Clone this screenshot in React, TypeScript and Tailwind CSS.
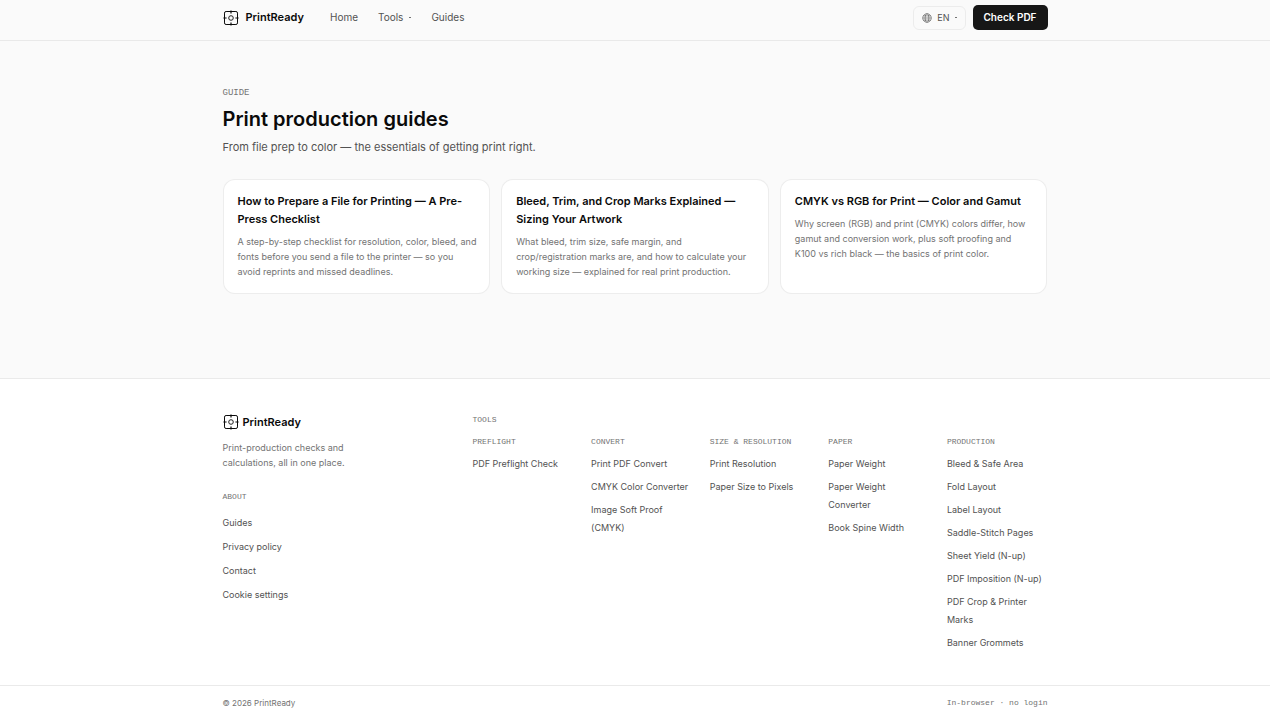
import { useState } from "react";

// Non-breaking spaces keep word pairs together inside the narrow cards.
const guides = [
  {
    title: "How to Prepare a File for Printing — A Pre-Press Checklist",
    desc: "A step-by-step checklist for resolution, color, bleed, and fonts before you send a file to the printer — so you avoid\u00a0reprints and missed deadlines.",
  },
  {
    title: "Bleed, Trim, and Crop Marks Explained — Sizing Your Artwork",
    desc: "What bleed, trim size, safe margin, and crop/registration\u00a0marks are, and how to calculate your working size — explained for real print production.",
  },
  {
    title: "CMYK vs RGB for Print — Color and Gamut",
    desc: "Why screen (RGB) and print (CMYK) colors differ, how gamut and conversion work, plus soft proofing and K100\u00a0vs rich black — the basics of print color.",
  },
];

const toolGroups = [
  { name: "Preflight", links: ["PDF Preflight Check"] },
  {
    name: "Convert",
    links: ["Print PDF Convert", "CMYK Color Converter", "Image Soft Proof (CMYK)"],
  },
  { name: "Size & resolution", links: ["Print Resolution", "Paper Size to Pixels"] },
  {
    name: "Paper",
    links: ["Paper Weight", "Paper Weight Converter", "Book Spine Width"],
  },
  {
    name: "Production",
    links: [
      "Bleed & Safe Area",
      "Fold Layout",
      "Label Layout",
      "Saddle-Stitch Pages",
      "Sheet Yield (N-up)",
      "PDF Imposition (N-up)",
      "PDF Crop & Printer Marks",
      "Banner Grommets",
    ],
  },
];

const aboutLinks = ["Guides", "Privacy policy", "Contact", "Cookie settings"];

// Registration-mark logo: rounded frame, four ticks, a ring in the middle.
function LogoMark() {
  return (
    <svg
      viewBox="0 0 16 16"
      className="size-4 shrink-0"
      fill="none"
      stroke="currentColor"
      aria-hidden="true"
    >
      <rect x="1.5" y="1.5" width="13" height="13" rx="1.6" strokeWidth="1" />
      <circle cx="8" cy="8" r="2.3" strokeWidth="0.9" />
      <path d="M8 0.4v3.2M8 12.4v3.2M0.4 8h3.2M12.4 8h3.2" strokeWidth="1.2" />
    </svg>
  );
}

function GlobeIcon() {
  return (
    <svg
      viewBox="0 0 10 10"
      className="size-[10px]"
      fill="none"
      stroke="currentColor"
      strokeWidth="0.6"
      aria-hidden="true"
    >
      <circle cx="5" cy="5" r="4.3" />
      <ellipse cx="5" cy="5" rx="1.9" ry="4.3" />
      <path d="M0.7 5h8.6M1.3 2.9h7.4M1.3 7.1h7.4" />
    </svg>
  );
}

function Caret() {
  return <span aria-hidden="true" className="h-px w-[2px] bg-neutral-500" />;
}

function Header() {
  const [toolsOpen, setToolsOpen] = useState(false);

  return (
    <header className="border-b border-neutral-200/80">
      <div className="mx-auto flex max-w-[857px] items-center justify-between px-4 pt-[5px] pb-[10px]">
        <div className="flex items-center gap-[26px]">
          <a href="#" className="flex items-center gap-[7px] text-[11px] font-semibold text-neutral-950">
            <LogoMark />
            PrintReady
          </a>
          <nav className="flex items-center gap-5 text-[10px] text-neutral-600">
            <a href="#">Home</a>
            <button
              type="button"
              aria-expanded={toolsOpen}
              onClick={() => setToolsOpen(!toolsOpen)}
              className="flex items-center gap-[6px]"
            >
              Tools
              <Caret />
            </button>
            <a href="#">Guides</a>
          </nav>
        </div>
        <div className="flex items-center gap-[7px]">
          <button
            type="button"
            aria-label="Language"
            className="flex h-6 items-center gap-[5px] rounded-md border border-neutral-200/70 px-2 text-[9px] text-neutral-600"
          >
            <GlobeIcon />
            EN
            <Caret />
          </button>
          <a
            href="#"
            className="flex h-[25px] items-center rounded-[5px] bg-neutral-900 px-[11px] text-[10px] font-semibold text-white"
          >
            Check PDF
          </a>
        </div>
      </div>
    </header>
  );
}

function Footer() {
  return (
    <footer className="border-t border-neutral-200/80 bg-white">
      <div className="mx-auto grid max-w-[857px] grid-cols-[218px_1fr] gap-8 px-4 pt-[35px] pb-[33px]">
        <div>
          <a href="#" className="flex items-center gap-1 text-[11px] leading-4 font-semibold text-neutral-950">
            <LogoMark />
            PrintReady
          </a>
          <p className="mt-[10px] max-w-[140px] text-[9px] leading-[15px] text-neutral-500">
            Print-production checks and calculations, all in one place.
          </p>
          <h2 className="mt-[21px] font-['Liberation_Mono',monospace] text-[8px] leading-3 text-neutral-500 uppercase">
            About
          </h2>
          <ul className="mt-[11px] flex flex-col gap-[6px] text-[9px] leading-[18px] text-neutral-600">
            {aboutLinks.map((l) => (
              <li key={l}>
                <a href="#">{l}</a>
              </li>
            ))}
          </ul>
        </div>
        <div>
          <h2 className="font-['Liberation_Mono',monospace] text-[8px] leading-3 text-neutral-500 uppercase">
            Tools
          </h2>
          <div className="mt-[10px] grid grid-cols-5 gap-[18px]">
            {toolGroups.map((g) => (
              <div key={g.name}>
                <h3 className="font-['Liberation_Mono',monospace] text-[8px] leading-3 whitespace-nowrap text-neutral-500 uppercase">
                  {g.name}
                </h3>
                <ul className="mt-[7px] flex flex-col gap-[5px] text-[9px] leading-[18px] text-neutral-600">
                  {g.links.map((l) => (
                    <li key={l}>
                      <a href="#">{l}</a>
                    </li>
                  ))}
                </ul>
              </div>
            ))}
          </div>
        </div>
      </div>
      <div className="border-t border-neutral-200/80">
        <div className="mx-auto flex max-w-[857px] items-center justify-between px-4 pt-[9px] pb-[10px] text-[8px] leading-4 text-neutral-500">
          <p>© 2026 PrintReady</p>
          <p className="font-['Liberation_Mono',monospace]">In-browser · no login</p>
        </div>
      </div>
    </footer>
  );
}

export default function App() {
  return (
    <div className="min-h-screen bg-neutral-50 font-['Inter',sans-serif] antialiased">
      <Header />
      <main className="mx-auto max-w-[857px] px-4 pt-[46px] pb-[84px]">
        <p className="font-['Liberation_Mono',monospace] text-[9px] leading-3 text-neutral-500 uppercase">
          Guide
        </p>
        <h1 className="mt-[6px] text-xl leading-7 font-semibold text-neutral-950">
          Print production guides
        </h1>
        <p className="mt-1 text-[11px] leading-5 text-neutral-600">
          From file prep to color — the essentials of getting print right.
        </p>
        <div className="mt-[22px] grid grid-cols-3 gap-[11px]">
          {guides.map((g) => (
            <a
              key={g.title}
              href="#"
              className="rounded-xl border border-neutral-200/70 bg-white pt-3 pr-[10px] pb-[14px] pl-[14px]"
            >
              <h2 className="text-[11px] leading-[18px] font-semibold text-neutral-950">
                {g.title}
              </h2>
              <p className="mt-[6px] text-[9px] leading-[15px] text-neutral-500">{g.desc}</p>
            </a>
          ))}
        </div>
      </main>
      <Footer />
    </div>
  );
}
